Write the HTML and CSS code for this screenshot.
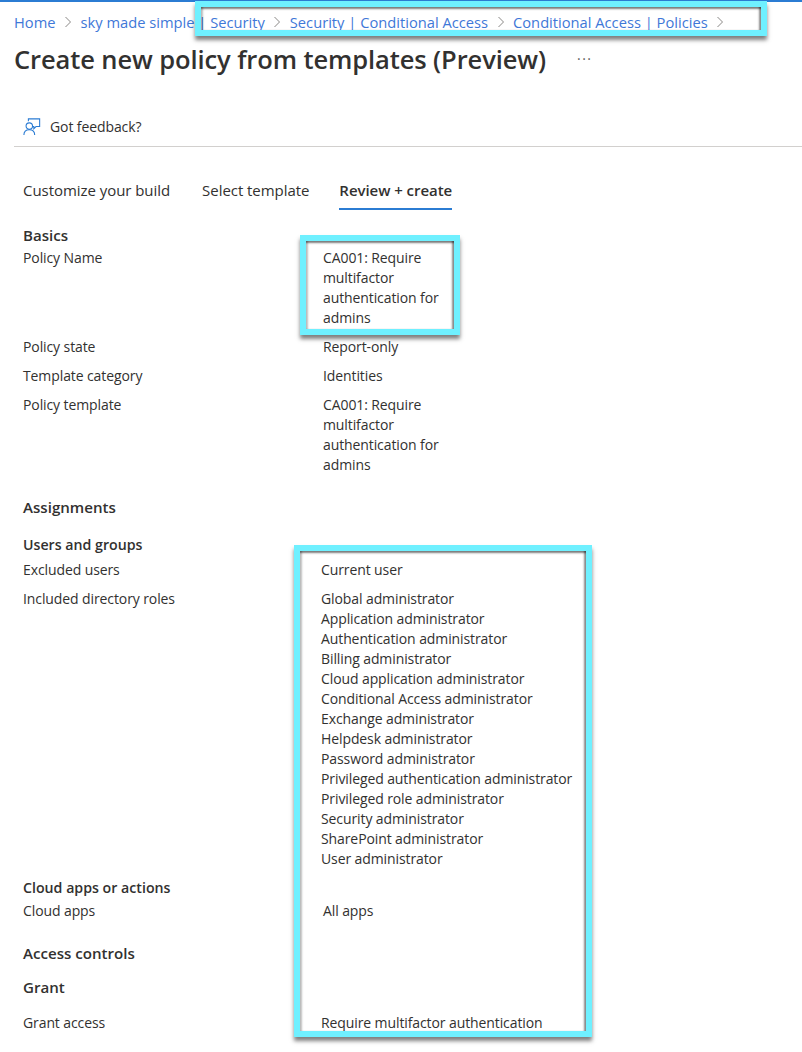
FILE: index.html
```html
<!DOCTYPE html>
<html lang="en">
	<head>
		<meta charset="UTF-8" />
		<title>Create new policy from templates (Preview)</title>
		<link rel="stylesheet" href="styles.css">
	</head>
	<body>
		<div class="topbar"></div>
		<nav class="crumbs">
			<a>Home</a>
			<svg class="chev" viewBox="0 0 8 12"><path d="M1.5 1l5 5-5 5" /></svg>
			<a>sky made simple | Security</a>
			<svg class="chev" viewBox="0 0 8 12"><path d="M1.5 1l5 5-5 5" /></svg>
			<a>Security | Conditional Access</a>
			<svg class="chev" viewBox="0 0 8 12"><path d="M1.5 1l5 5-5 5" /></svg>
			<a>Conditional Access | Policies</a>
			<svg class="chev" viewBox="0 0 8 12"><path d="M1.5 1l5 5-5 5" /></svg>
		</nav>
		<header class="head">
			<h1 class="title">Create new policy from templates (Preview)</h1>
			<span class="more">···</span>
		</header>
		<div class="toolbar">
			<svg class="feedback-icon" viewBox="0 0 20 20">
				<path d="M6 3.5V1h12.5v8.5h-4l-2.5 2.5V9.5h-1" />
				<circle cx="7" cy="9" r="3.6" />
				<path d="M1 19c0-4 2.5-6 6-6s6 2 6 6" />
			</svg>
			<span>Got feedback?</span>
		</div>
		<div class="tabs">
			<span class="tab">Customize your build</span>
			<span class="tab">Select template</span>
			<span class="tab tab-active">Review + create</span>
		</div>
		<main class="summary">
			<h2 class="section big first">Basics</h2>
			<div class="row">
				<div class="label">Policy Name</div>
				<div class="value narrow">CA001: Require multifactor authentication for admins</div>
			</div>
			<div class="row gap-9">
				<div class="label">Policy state</div>
				<div class="value narrow">Report-only</div>
			</div>
			<div class="row gap-9">
				<div class="label">Template category</div>
				<div class="value narrow">Identities</div>
			</div>
			<div class="row gap-9">
				<div class="label">Policy template</div>
				<div class="value narrow">CA001: Require multifactor authentication for admins</div>
			</div>
			<h2 class="section big assignments">Assignments</h2>
			<h2 class="section users">Users and groups</h2>
			<div class="row gap-5">
				<div class="label">Excluded users</div>
				<div class="value left">Current user</div>
			</div>
			<div class="row gap-9">
				<div class="label">Included directory roles</div>
				<div class="value left">
					<div>Global administrator</div>
					<div>Application administrator</div>
					<div>Authentication administrator</div>
					<div>Billing administrator</div>
					<div>Cloud application administrator</div>
					<div>Conditional Access administrator</div>
					<div>Exchange administrator</div>
					<div>Helpdesk administrator</div>
					<div>Password administrator</div>
					<div>Privileged authentication administrator</div>
					<div>Privileged role administrator</div>
					<div>Security administrator</div>
					<div>SharePoint administrator</div>
					<div>User administrator</div>
				</div>
			</div>
			<h2 class="section apps">Cloud apps or actions</h2>
			<div class="row gap-3">
				<div class="label">Cloud apps</div>
				<div class="value">All apps</div>
			</div>
			<h2 class="section big controls">Access controls</h2>
			<h2 class="section big grant">Grant</h2>
			<div class="row gap-16">
				<div class="label">Grant access</div>
				<div class="value left">Require multifactor authentication</div>
			</div>
		</main>
		<div class="callout callout-crumbs"></div>
		<div class="callout callout-name"></div>
		<div class="callout callout-values"></div>
	</body>
</html>
```

FILE: styles.css
```css
*,
*::before,
*::after {
	box-sizing: border-box;
}
html,
body {
	height: 100%;
}
body {
	margin: 0;
	background-color: #ffffff;
	color: #323130;
	font-family: 'Open Sans', sans-serif;
	font-size: 14px;
	line-height: 20px;
	letter-spacing: -0.1px;
	position: relative;
	overflow: hidden;
}
.topbar {
	height: 2px;
	background-color: #2b7cd3;
}
.crumbs {
	display: flex;
	align-items: center;
	height: 20px;
	margin-top: 10px;
	padding-left: 14px;
	color: #3f78d8;
	font-size: 14.7px;
	letter-spacing: 0;
	white-space: nowrap;
}
.chev {
	width: 8px;
	height: 12px;
	margin: 0 8.5px;
	fill: none;
	stroke: #8a8886;
	stroke-width: 1;
}
.head {
	display: flex;
	align-items: center;
	margin-top: 9px;
	padding-left: 14px;
	height: 36px;
}
.title {
	margin: 0;
	font-size: 25.5px;
	line-height: 36px;
	font-weight: 600;
}
.more {
	margin-left: 31px;
	font-size: 14px;
	letter-spacing: 1.5px;
	color: #605e5c;
}
.toolbar {
	display: flex;
	align-items: center;
	gap: 9px;
	height: 43px;
	margin: 27px 0 0 14px;
	padding: 3px 0 0 9px;
	border-bottom: 1px solid #d2d0ce;
}
.feedback-icon {
	width: 18px;
	height: 18px;
	fill: none;
	stroke: #2b7cd3;
	stroke-width: 1.2;
}
.tabs {
	display: flex;
	gap: 32px;
	margin-top: 24px;
	padding-left: 23px;
	letter-spacing: -0.05px;
}
.tab {
	height: 39px;
	line-height: 38px;
	font-size: 15px;
}
.tab-active {
	margin-left: -2px;
	font-weight: 600;
	border-bottom: 2px solid #2b7cd3;
}
.summary {
	padding-left: 23px;
}
.section {
	margin: 0;
	font-size: 14.2px;
	line-height: 20px;
	font-weight: 600;
	letter-spacing: 0;
}
.big {
	font-size: 15.1px;
}
.first {
	margin-top: 15px;
}
.assignments {
	margin-top: 22px;
}
.users {
	margin-top: 18px;
}
.apps {
	margin-top: 9px;
}
.controls {
	margin-top: 22px;
}
.grant {
	margin-top: 14px;
}
.row {
	display: flex;
	margin-top: 3px;
}
.gap-3 {
	margin-top: 3px;
}
.gap-5 {
	margin-top: 5px;
}
.gap-9 {
	margin-top: 9px;
}
.gap-16 {
	margin-top: 16px;
}
.label {
	flex: 0 0 300px;
}
.value.narrow {
	width: 130px;
}
.value.left {
	margin-left: -2px;
}
.callout {
	position: absolute;
	border: 6px solid #6ff0ff;
	box-shadow:
		0 4px 4px 0 rgba(0, 0, 0, 0.5),
		inset 0 3px 2px -1px rgba(0, 0, 0, 0.5),
		inset -3px 0 2px -1px rgba(0, 0, 0, 0.45),
		inset 3px 0 2px -1px rgba(0, 0, 0, 0.25);
}
.callout-crumbs {
	left: 195px;
	top: 1px;
	width: 572px;
	height: 35px;
}
.callout-name {
	left: 300px;
	top: 235px;
	width: 160px;
	height: 100px;
}
.callout-values {
	left: 294px;
	top: 545px;
	width: 298px;
	height: 492px;
}
```
